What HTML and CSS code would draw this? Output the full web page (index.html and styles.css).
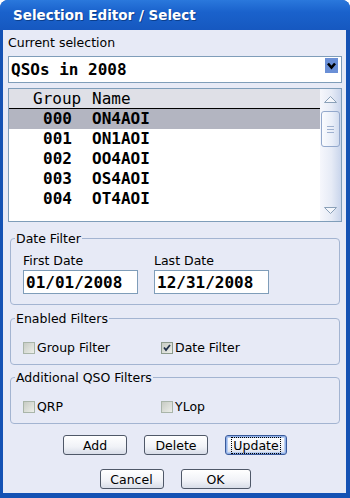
FILE: index.html
```html
<!DOCTYPE html>
<html lang="en">
<head>
    <meta charset="UTF-8">
    <title>Selection Editor / Select</title>
    <link rel="stylesheet" href="styles.css">
</head>
<body>
    <div class="window">
        <div class="titlebar">Selection Editor / Select</div>
        <div class="content">
            <div class="label top-label">Current selection</div>
            <div class="combo">
                <span class="combo-text">QSOs in 2008</span>
                <span class="drop">
                    <svg width="13" height="15" viewBox="0 0 13 15"><path d="M3 5.5 L6.5 9.5 L10 5.5" fill="none" stroke="#000" stroke-width="2.6"/></svg>
                </span>
            </div>

            <div class="list">
                <div class="list-main">
                    <div class="list-head"><span class="col-group">Group</span><span>Name</span></div>
                    <div class="row selected"><span class="col-group num">000</span><span>ON4AOI</span></div>
                    <div class="row"><span class="col-group num">001</span><span>ON1AOI</span></div>
                    <div class="row"><span class="col-group num">002</span><span>OO4AOI</span></div>
                    <div class="row"><span class="col-group num">003</span><span>OS4AOI</span></div>
                    <div class="row"><span class="col-group num">004</span><span>OT4AOI</span></div>
                </div>
                <div class="scrollbar">
                    <div class="arrow">
                        <svg width="19" height="12" viewBox="0 0 19 12"><path d="M3.5 9.5 L9.5 3.5 L15.5 9.5 Z" fill="#f4f6fb" stroke="#8aa0b8" stroke-width="1"/></svg>
                    </div>
                    <div class="thumb"><span></span><span></span><span></span></div>
                    <div class="track"></div>
                    <div class="arrow">
                        <svg width="19" height="12" viewBox="0 0 19 12"><path d="M3.5 2.5 L9.5 8.5 L15.5 2.5 Z" fill="#f4f6fb" stroke="#8aa0b8" stroke-width="1"/></svg>
                    </div>
                </div>
            </div>

            <fieldset class="group date-group">
                <legend>Date Filter</legend>
                <div class="date-grid">
                    <div>
                        <div class="label">First Date</div>
                        <input class="date" type="text" value="01/01/2008">
                    </div>
                    <div>
                        <div class="label">Last Date</div>
                        <input class="date" type="text" value="12/31/2008">
                    </div>
                </div>
            </fieldset>

            <fieldset class="group check-group">
                <legend>Enabled Filters</legend>
                <div class="check-grid">
                    <label class="check"><span class="box"></span>Group Filter</label>
                    <label class="check"><span class="box on"><svg width="10" height="10" viewBox="0 0 10 10"><path d="M2 4.5 L4 7 L8 2" fill="none" stroke="#21304a" stroke-width="1.8"/></svg></span>Date Filter</label>
                </div>
            </fieldset>

            <fieldset class="group check-group">
                <legend>Additional QSO Filters</legend>
                <div class="check-grid">
                    <label class="check"><span class="box"></span>QRP</label>
                    <label class="check"><span class="box"></span>YLop</label>
                </div>
            </fieldset>

            <div class="buttons">
                <button class="btn">Add</button>
                <button class="btn">Delete</button>
                <button class="btn focus"><span>Update</span></button>
            </div>
            <div class="buttons second">
                <button class="btn">Cancel</button>
                <button class="btn wide">OK</button>
            </div>
        </div>
    </div>
</body>
</html>
```

FILE: styles.css
```css
body {
    margin: 0;
    padding: 0;
    font-family: "DejaVu Sans", sans-serif;
    font-size: 12.5px;
}
.window {
    width: 350px;
    height: 498px;
    display: flex;
    flex-direction: column;
    background: #1452b4;
    border-radius: 8px 8px 0 0;
    overflow: hidden;
}
.titlebar {
    height: 30px;
    line-height: 30px;
    padding-left: 13px;
    color: white;
    font-weight: bold;
    font-size: 13.5px;
    background: linear-gradient(to bottom, #2a78dc, #1a62cc 40%, #1658c0);
    text-shadow: 1px 1px 0 #0c3f8c;
}
.content {
    flex: 1;
    margin: 0 4px 5px 3px;
    padding: 5px 4px 0 5px;
    background: #e7eaf6;
    color: #000;
}
.label {
    line-height: 15px;
}
.combo {
    margin-top: 6px;
    height: 25px;
    border: 1px solid #7f9db9;
    background: white;
    display: flex;
    align-items: flex-start;
    justify-content: space-between;
}
.combo-text {
    font-family: "DejaVu Sans Mono", monospace;
    font-weight: bold;
    font-size: 16px;
    line-height: 25px;
    padding-left: 2px;
}
.drop {
    width: 13px;
    height: 15px;
    margin: 1px 3px 0 0;
    background: #6a8fd6;
    display: flex;
}
.list {
    margin-top: 5px;
    height: 132px;
    border: 1px solid #7f9db9;
    background: white;
    display: flex;
}
.list-main {
    flex: 1;
    font-family: "DejaVu Sans Mono", monospace;
    font-size: 16px;
}
.list-head {
    height: 19px;
    line-height: 19px;
    background: #dfe0e7;
    border-bottom: 1px solid #000;
    display: flex;
}
.row {
    height: 20px;
    line-height: 20px;
    display: flex;
    font-weight: bold;
}
.row.selected {
    background: #b3b5c1;
}
.col-group {
    width: 59px;
    margin-left: 24px;
}
.num {
    padding-left: 10px;
    width: 49px;
}
.scrollbar {
    width: 21px;
    display: flex;
    flex-direction: column;
    background: linear-gradient(to right, #f6f7fc, #e6ebf6 55%, #c9d5ec);
}
.arrow {
    height: 20px;
    display: flex;
    align-items: center;
    justify-content: center;
}
.thumb {
    height: 34px;
    margin: 2px 1px 0 1px;
    border: 1px solid #93a8cc;
    border-radius: 3px;
    background: linear-gradient(to right, #fafbfe, #e9eef8 60%, #d2dcef);
    display: flex;
    flex-direction: column;
    align-items: center;
    justify-content: center;
    gap: 2px;
}
.thumb span {
    width: 7px;
    height: 1px;
    background: #9eb0cf;
}
.track {
    flex: 1;
}
.group {
    margin: 0 2px;
    border: 1px solid #a3b4d1;
    border-radius: 4px;
    padding: 7px 12px 10px 12px;
}
.group legend {
    padding: 0 1px;
    margin-left: -8px;
    line-height: 15px;
}
.date-group {
    margin-top: 9px;
}
.date-grid {
    display: grid;
    grid-template-columns: 131px 131px;
}
.date {
    display: block;
    margin-top: 2px;
    width: 115px;
    height: 24px;
    box-sizing: border-box;
    border: 1px solid #7f9db9;
    padding: 0 0 0 2px;
    font-family: "DejaVu Sans Mono", monospace;
    font-weight: bold;
    font-size: 16px;
    color: #000;
    background: white;
}
.check-group {
    margin-top: 6px;
    padding: 14px 12px 9px 12px;
}
.check-group + .check-group {
    margin-top: 5px;
}
.check-grid {
    display: grid;
    grid-template-columns: 138px 138px;
}
.check {
    display: flex;
    align-items: center;
    gap: 2px;
    line-height: 15px;
    color: #000;
}
.box {
    width: 10px;
    height: 10px;
    border: 1px solid #a9b5a9;
    background: linear-gradient(135deg, #c7cbc4, #eceee9);
    display: flex;
    align-items: center;
    justify-content: center;
}
.box.on {
    border-color: #8c9a8c;
}
.buttons {
    margin-top: 11px;
    display: flex;
    justify-content: center;
    gap: 17px;
}
.buttons.second {
    margin-top: 14px;
}
.btn {
    width: 64px;
    height: 20px;
    padding: 0;
    border: 1px solid #4f5868;
    border-radius: 3px;
    background: linear-gradient(to bottom, #ffffff, #f0f2f7 60%, #d8dde8);
    font-family: "DejaVu Sans", sans-serif;
    font-size: 12.5px;
    color: #000;
}
.btn.wide {
    width: 70px;
}
.btn.focus {
    width: 62px;
    border-color: #3a5a9a;
    box-shadow: inset 0 0 0 1px #8fb0e8, inset 0 0 0 2px #b9cdf0;
}
.btn.focus span {
    border: 1px dotted #000;
    padding: 0 1px;
}
```
